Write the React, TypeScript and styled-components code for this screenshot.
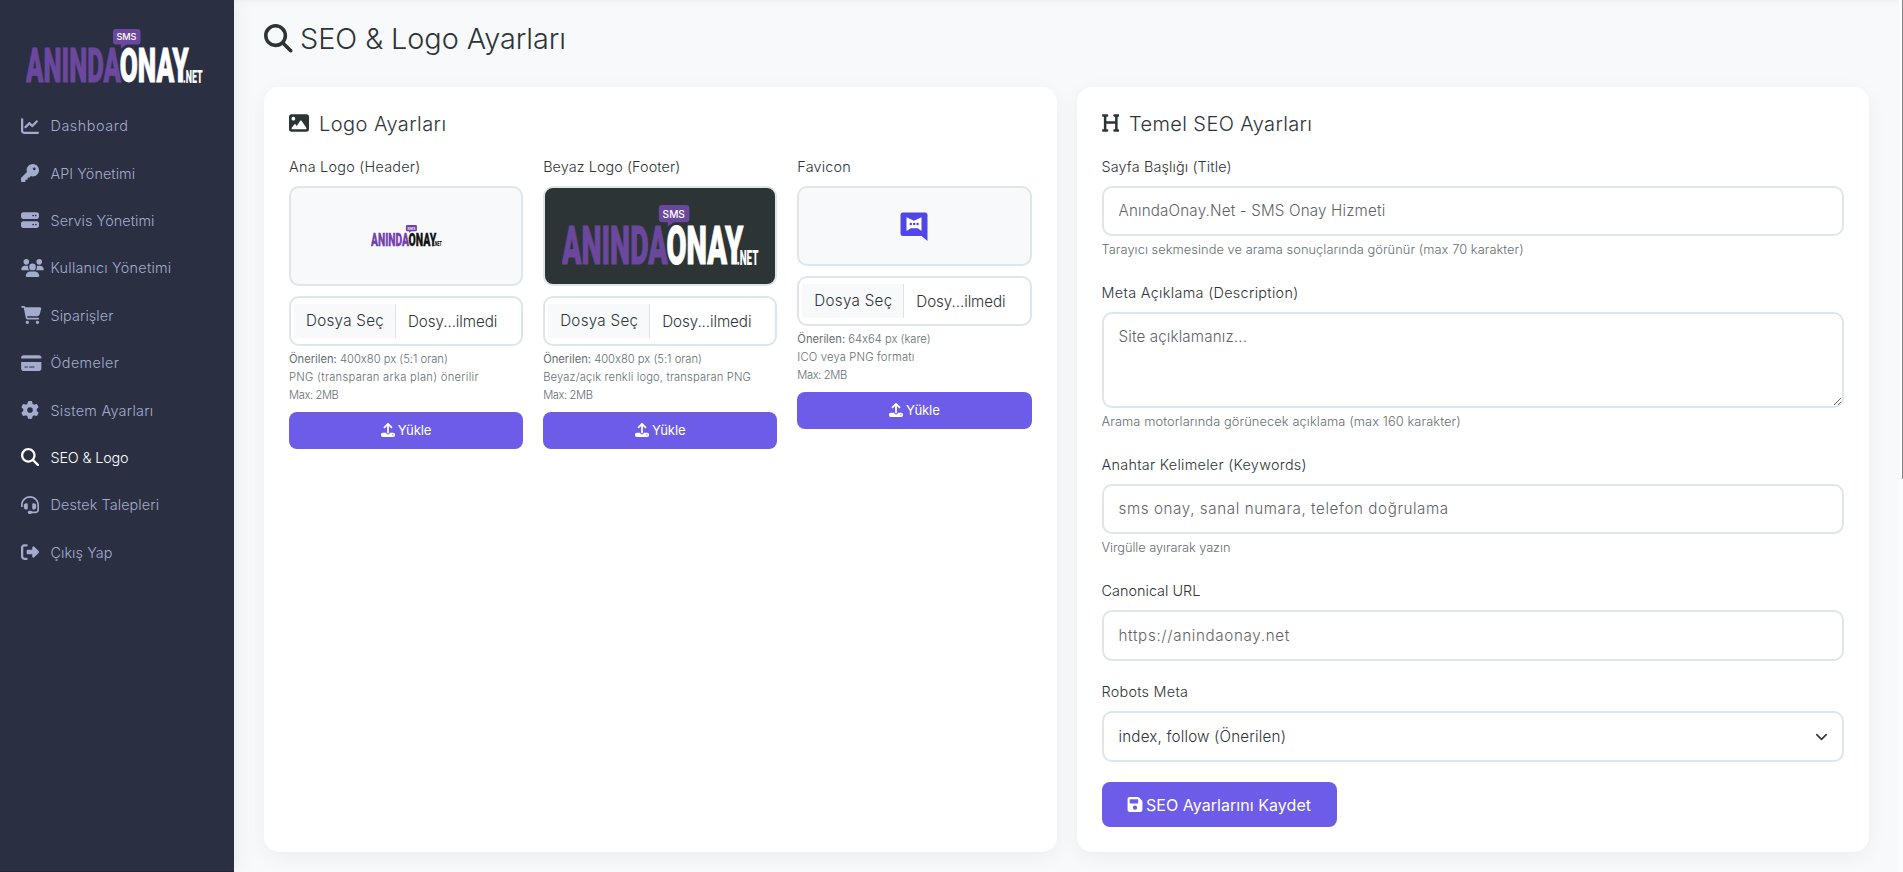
import React from "react";
import styled, { createGlobalStyle, css } from "styled-components";
import {
  FaChartLine, FaKey, FaServer, FaUsers, FaCartShopping, FaCreditCard, FaGear,
  FaMagnifyingGlass, FaHeadset, FaRightFromBracket, FaImage, FaHeading, FaUpload, FaFloppyDisk,
} from "react-icons/fa6";

const Global = createGlobalStyle`
  *, *::before, *::after { box-sizing: border-box; }
  body {
    margin: 0;
    background: #f8f9fb;
    color: #2d3436;
    font-family: Inter, "Open Sans", sans-serif;
    font-weight: 300;
    font-feature-settings: "calt" 0;
    overflow: hidden;
  }
  svg { display: block; flex: none; }
`;

const Shell = styled.div`
  display: flex;
  height: 872px;
`;

const Sidebar = styled.aside`
  flex: none;
  width: 234px;
  background: #2b2f42;
  box-shadow: 2px 0 20px rgba(0, 0, 0, 0.06);
  border-bottom: 1px solid #2b2135;
`;

const Brand = styled.div`
  padding: 29px 0 0 25.5px;
  height: 102px;
`;

const Nav = styled.nav`
  display: flex;
  flex-direction: column;
`;

const NavItem = styled.a<{ $active?: boolean; $ls: number }>`
  display: flex;
  align-items: center;
  height: 47.4px;
  padding-left: 21px;
  color: ${(p) => (p.$active ? "#ffffff" : "#a3accd")};
  font-size: 14.4px;
  letter-spacing: ${(p) => p.$ls}px;
  white-space: nowrap;
`;

const NavIcon = styled.span<{ $w: number }>`
  display: flex;
  width: 29.5px;
  svg {
    width: ${(p) => p.$w}px;
    height: 18px;
  }
`;

const Main = styled.main`
  flex: 1;
  padding: 20px 30px 20px;
  box-shadow: inset 0 12px 10px -11px rgba(0, 0, 0, 0.05);
`;

const PageTitle = styled.h1`
  display: flex;
  align-items: center;
  gap: 7.5px;
  height: 37px;
  margin: 0 0 30px;
  font-size: 28.8px;
  font-weight: 300;
  line-height: 37px;
  letter-spacing: -0.04px;
  svg { font-size: 28.5px; }
`;

const Cards = styled.div`
  display: grid;
  grid-template-columns: 1fr 1fr;
  gap: 20px;
  width: 1605px;
  height: 765px;
`;

const Card = styled.section`
  padding: 25px;
  background: #fff;
  border-radius: 15px;
  box-shadow: 0 5px 20px rgba(0, 0, 0, 0.05);
`;

const CardTitle = styled.h2<{ $ls: number; $icon: number }>`
  display: flex;
  align-items: center;
  height: 24px;
  margin: 0 0 20px;
  font-size: 20px;
  font-weight: 300;
  line-height: 24px;
  letter-spacing: ${(p) => p.$ls}px;
  svg {
    width: ${(p) => p.$icon}px;
    height: 20px;
    margin: -2px 10px 0 0;
  }
`;

const Uploads = styled.div`
  display: grid;
  grid-template-columns: repeat(3, 1fr);
  gap: 20px;
  align-items: start;
`;

const Upload = styled.div`
  display: flex;
  flex-direction: column;
`;

const Label = styled.label<{ $ls: number }>`
  display: block;
  height: 22px;
  margin-bottom: 8px;
  font-size: 14.4px;
  line-height: 22px;
  letter-spacing: ${(p) => p.$ls}px;
  white-space: nowrap;
`;

const Preview = styled.div<{ $h: number; $dark?: boolean }>`
  display: flex;
  align-items: center;
  justify-content: center;
  height: ${(p) => p.$h}px;
  border: 2px solid #dfe6e9;
  border-radius: 10px;
  background: ${(p) => (p.$dark ? "#2d3436" : "#f8f9fb")};
`;

const FileField = styled.div`
  display: flex;
  align-items: center;
  height: 50px;
  margin-top: 10px;
  padding: 0 3px;
  border: 2px solid #dfe6e9;
  border-radius: 10px;
  font-size: 15.2px;
  white-space: nowrap;
`;

const FileButton = styled.span`
  height: 34px;
  width: 102px;
  padding-left: 12px;
  border-right: 1px solid #dee2e6;
  background: #f8f9fb;
  line-height: 33px;
  letter-spacing: 0.28px;
`;

const FileName = styled.span`
  padding-left: 12px;
  line-height: 33px;
  letter-spacing: -0.08px;
`;

const SmallHints = styled.div`
  margin-top: 4px;
  color: #636e72;
  font-size: 11.2px;
  line-height: 18px;
  height: 54px;
  white-space: nowrap;
  b { font-weight: 400; }
`;

const HintLine = styled.div<{ $ls: number }>`
  letter-spacing: ${(p) => p.$ls}px;
`;

const buttonLook = css`
  display: flex;
  align-items: center;
  justify-content: center;
  border: 0;
  border-radius: 8px;
  background: #6c5ce7;
  color: #fff;
  font-family: inherit;
  font-weight: 400;
`;

const UploadButton = styled.button`
  ${buttonLook}
  gap: 3px;
  height: 37px;
  margin-top: 8px;
  padding: 0 0 2px;
  font-size: 13.2px;
  letter-spacing: -0.15px;
  svg { font-size: 14px; }
`;

const SaveButton = styled.button`
  ${buttonLook}
  gap: 3px;
  width: 235px;
  height: 45px;
  padding: 0;
  font-size: 16px;
  letter-spacing: 0.05px;
  svg { width: 16px; height: 17px; }
`;

const Field = styled.div<{ $mb: number }>`
  margin-bottom: ${(p) => p.$mb}px;
`;

const controlLook = css`
  display: block;
  width: 100%;
  padding: 0 15px 1px;
  border: 2px solid #dfe6e9;
  border-radius: 10px;
  background: #fff;
  color: #2d3436;
  font-family: inherit;
  font-weight: 300;
  font-size: 15.2px;
  outline: none;
  &::placeholder { color: #5f6268; opacity: 1; }
`;

const Input = styled.input<{ $ls: number; $h?: number }>`
  ${controlLook}
  height: ${(p) => p.$h ?? 50}px;
  letter-spacing: ${(p) => p.$ls}px;
`;

const TextArea = styled.textarea`
  ${controlLook}
  height: 96px;
  padding: 12px 15px;
  line-height: 22.8px;
  letter-spacing: 0.13px;
  resize: vertical;
`;

const Select = styled.div`
  ${controlLook}
  display: flex;
  align-items: center;
  justify-content: space-between;
  height: 51px;
  padding-right: 13px;
  letter-spacing: 0.18px;
  svg { width: 15px; height: 15px; }
`;

const Hint = styled.p<{ $ls: number }>`
  height: 18px;
  margin: 4px 0 0;
  color: #636e72;
  font-size: 12.8px;
  line-height: 20px;
  letter-spacing: ${(p) => p.$ls}px;
  white-space: nowrap;
`;

const ScrollTrack = styled.div`
  flex: none;
  width: 4px;
  padding-left: 3px;
  background: #fcfcfd;
`;

const ScrollThumb = styled.div`
  height: 479px;
  background: #858585;
`;

function Logo({ width, ink, accent }: { width: number; ink: string; accent: string }) {
  const word = { fontFamily: "Roboto, Inter, sans-serif", fontWeight: 900, fontSize: 48, strokeWidth: 0.9 };
  return (
    <svg width={width} height={(width * 55) / 177} viewBox="0 0 177 55">
      <path d="M90 0h21.500a3 3 0 0 1 3 3v9.400a3 3 0 0 1-3 3h-11l-5.500 4v-4h-5a3 3 0 0 1-3-3V3a3 3 0 0 1 3-3z" fill={accent} />
      <text x="90.400" y="11.300" textLength="20" lengthAdjust="spacingAndGlyphs" fontFamily="Inter, sans-serif" fontWeight={500} fontSize="9.500" fill="#fff">SMS</text>
      <text {...word} x="0" y="53.200" textLength="95" lengthAdjust="spacingAndGlyphs" fill={accent} stroke={accent}>ANINDA</text>
      <text {...word} x="93.800" y="53.200" textLength="69" lengthAdjust="spacingAndGlyphs" fill={ink} stroke={ink}>ONAY</text>
      <text x="157" y="53.500" textLength="19.500" lengthAdjust="spacingAndGlyphs" fontFamily="Roboto, Inter, sans-serif" fontWeight={900} fontSize="18.500" fill={ink}>.NET</text>
    </svg>
  );
}

function Favicon() {
  return (
    <svg width="28" height="29" viewBox="0 0 28 29">
      <path d="M3 0.500h22a2.500 2.500 0 0 1 2.500 2.500v26L21.500 24H3A2.500 2.500 0 0 1 0.500 21.500V3A2.500 2.500 0 0 1 3 0.500z" fill="#4f46e5" />
      <path d="M6.500 5.300l7.400 3.400 7.600-3.400v13.700l-3.700-2.800h-6.900L6.500 19z" fill="#fff" />
      <circle cx="10.800" cy="12" r="1.250" fill="#4f46e5" />
      <circle cx="14.200" cy="12" r="1.250" fill="#4f46e5" />
      <circle cx="17.600" cy="12" r="1.250" fill="#4f46e5" />
    </svg>
  );
}

const navItems: { icon: React.ReactNode; text: string; ls: number; w?: number; active?: boolean }[] = [
  { icon: <FaChartLine />, text: "Dashboard", ls: 0.55 },
  { icon: <FaKey />, text: "API Yönetimi", ls: 0.06 },
  { icon: <FaServer />, text: "Servis Yönetimi", ls: 0.06 },
  { icon: <FaUsers />, text: "Kullanıcı Yönetimi", ls: 0.24, w: 23 },
  { icon: <FaCartShopping />, text: "Siparişler", ls: 0.08, w: 20.5 },
  { icon: <FaCreditCard />, text: "Ödemeler", ls: 0.4, w: 20.5 },
  { icon: <FaGear />, text: "Sistem Ayarları", ls: 0.28 },
  { icon: <FaMagnifyingGlass />, text: "SEO & Logo", ls: -0.16, active: true },
  { icon: <FaHeadset />, text: "Destek Talepleri", ls: 0.1 },
  { icon: <FaRightFromBracket />, text: "Çıkış Yap", ls: 0.06 },
];

type UploadProps = {
  label: string;
  ls: number;
  height: number;
  dark?: boolean;
  size: string;
  sizeLs: number;
  format: string;
  formatLs: number;
  children: React.ReactNode;
};

function UploadBox({ label, ls, height, dark, size, sizeLs, format, formatLs, children }: UploadProps) {
  return (
    <Upload>
      <Label $ls={ls}>{label}</Label>
      <Preview $h={height} $dark={dark}>{children}</Preview>
      <FileField>
        <FileButton>Dosya Seç</FileButton>
        <FileName>Dosy...ilmedi</FileName>
      </FileField>
      <SmallHints>
        <HintLine $ls={sizeLs}><b>Önerilen:</b> {size}</HintLine>
        <HintLine $ls={formatLs}>{format}</HintLine>
        <HintLine $ls={-0.4}>Max: 2MB</HintLine>
      </SmallHints>
      <UploadButton><FaUpload />Yükle</UploadButton>
    </Upload>
  );
}

export default function App() {
  return (
    <>
      <Global />
      <Shell>
        <Sidebar>
          <Brand><Logo width={177} ink="#ffffff" accent="#6b489d" /></Brand>
          <Nav>
            {navItems.map((n) => (
              <NavItem key={n.text} $active={n.active} $ls={n.ls}>
                <NavIcon $w={n.w ?? 18}>{n.icon}</NavIcon>{n.text}
              </NavItem>
            ))}
          </Nav>
        </Sidebar>
        <Main>
          <PageTitle><FaMagnifyingGlass />SEO &amp; Logo Ayarları</PageTitle>
          <Cards>
            <Card>
              <CardTitle $ls={0.44} $icon={20}><FaImage />Logo Ayarları</CardTitle>
              <Uploads>
                <UploadBox label="Ana Logo (Header)" ls={0.25} height={100} size="400x80 px (5:1 oran)" sizeLs={0} format="PNG (transparan arka plan) önerilir" formatLs={0.28}>
                  <Logo width={71} ink="#111111" accent="#7340b0" />
                </UploadBox>
                <UploadBox label="Beyaz Logo (Footer)" ls={0.08} height={100} dark size="400x80 px (5:1 oran)" sizeLs={0} format="Beyaz/açık renkli logo, transparan PNG" formatLs={0.14}>
                  <Logo width={197} ink="#ffffff" accent="#6b489d" />
                </UploadBox>
                <UploadBox label="Favicon" ls={0.2} height={80} size="64x64 px (kare)" sizeLs={0} format="ICO veya PNG formatı" formatLs={0.18}>
                  <Favicon />
                </UploadBox>
              </Uploads>
            </Card>
            <Card>
              <CardTitle $ls={0.38} $icon={17.5}><FaHeading />Temel SEO Ayarları</CardTitle>
              <Field $mb={24}>
                <Label $ls={0.13}>Sayfa Başlığı (Title)</Label>
                <Input $ls={0.16} placeholder="AnındaOnay.Net - SMS Onay Hizmeti" />
                <Hint $ls={0.07}>Tarayıcı sekmesinde ve arama sonuçlarında görünür (max 70 karakter)</Hint>
              </Field>
              <Field $mb={24}>
                <Label $ls={0.33}>Meta Açıklama (Description)</Label>
                <TextArea placeholder="Site açıklamanız..." />
                <Hint $ls={0.11}>Arama motorlarında görünecek açıklama (max 160 karakter)</Hint>
              </Field>
              <Field $mb={24}>
                <Label $ls={0.28}>Anahtar Kelimeler (Keywords)</Label>
                <Input $ls={0.58} placeholder="sms onay, sanal numara, telefon doğrulama" />
                <Hint $ls={-0.06}>Virgülle ayırarak yazın</Hint>
              </Field>
              <Field $mb={20}>
                <Label $ls={0.03}>Canonical URL</Label>
                <Input $ls={0.65} $h={51} placeholder="https://anindaonay.net" />
              </Field>
              <Field $mb={20}>
                <Label $ls={0.26}>Robots Meta</Label>
                <Select>
                  index, follow (Önerilen)
                  <svg viewBox="0 0 16 16" fill="none" stroke="#343a40" strokeWidth="1.800" strokeLinecap="round" strokeLinejoin="round">
                    <path d="m3 6 5 5 5-5" />
                  </svg>
                </Select>
              </Field>
              <SaveButton><FaFloppyDisk />SEO Ayarlarını Kaydet</SaveButton>
            </Card>
          </Cards>
        </Main>
        <ScrollTrack><ScrollThumb /></ScrollTrack>
      </Shell>
    </>
  );
}
